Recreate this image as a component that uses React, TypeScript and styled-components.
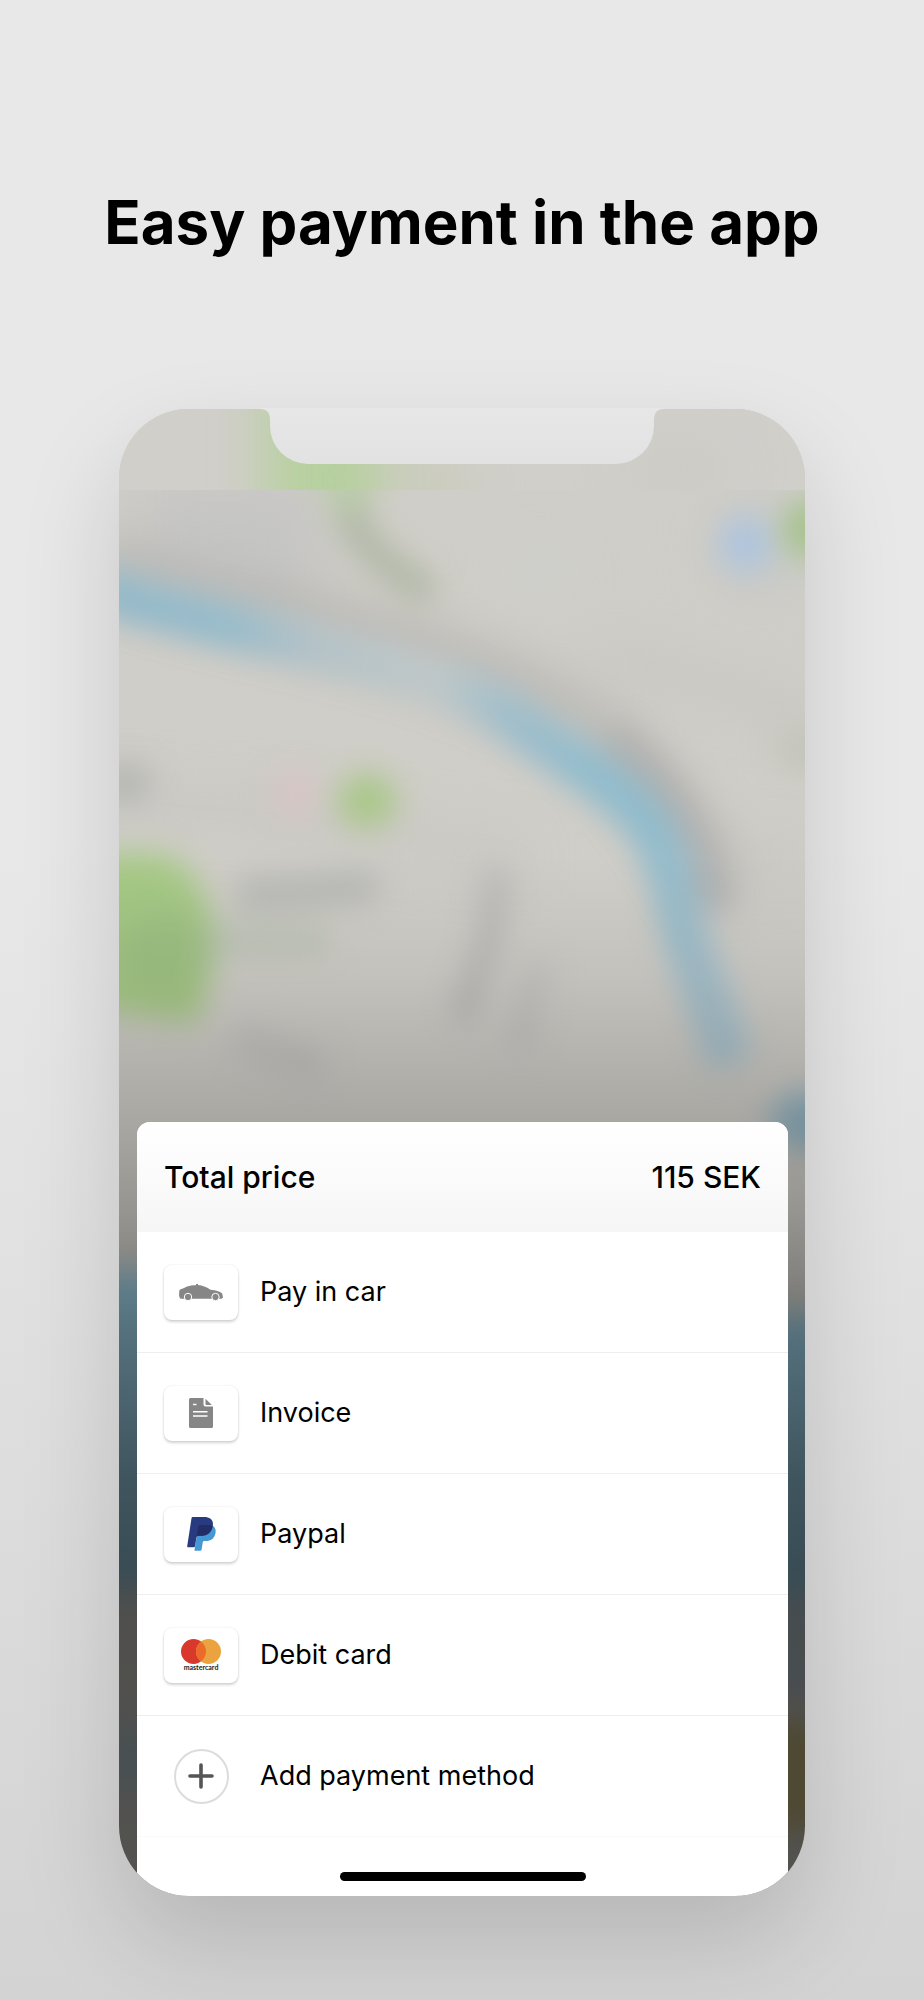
import React from "react";
import styled, { createGlobalStyle } from "styled-components";

const GlobalStyle = createGlobalStyle`
  *, *::before, *::after { box-sizing: border-box; }
  html { background: #e8e8e8; }
  body {
    margin: 0;
    color: #000;
    font-family: Inter, "Liberation Sans", sans-serif;
  }
  #root { min-height: 100vh; display: flex; flex-direction: column; }
`;

const Page = styled.main`
  flex: 1;
  display: flex;
  flex-direction: column;
  align-items: center;
  padding: 182px 24px 104px;
  overflow: hidden;
  background: linear-gradient(#e8e8e8 0%, #e8e8e8 42%, #e3e3e3 58%, #d3d3d3 100%);
`;

const Title = styled.h1`
  margin: 0 0 147px;
  font-size: 60px;
  line-height: 80px;
  font-weight: 700;
  text-align: center;
`;

const Phone = styled.section`
  position: relative;
  width: 100%;
  max-width: 686px;
  border-radius: 70px;
  box-shadow: 0 44px 100px rgba(0, 0, 0, 0.15);
`;

const Screen = styled.div`
  position: relative;
  padding: 713px 17px 0 18px;
  overflow: hidden;
  border-radius: inherit;
  background: #d0cec8;
`;

const MapCanvas = styled.svg`
  position: absolute;
  inset: 0;
  width: 100%;
  height: 100%;
`;

const Notch = styled.svg`
  position: absolute;
  top: -1px;
  left: 50%;
  width: 404px;
  max-width: 60%;
  transform: translateX(-50%);
`;

const Sheet = styled.div`
  position: relative;
  display: flex;
  flex-direction: column;
  overflow: hidden;
  border-radius: 13px 13px 0 0;
  background: #fff;
`;

const Total = styled.header`
  display: flex;
  justify-content: space-between;
  align-items: center;
  height: 110px;
  padding: 0 27px;
  background: linear-gradient(#fff, #f6f6f6);
  font-size: 30px;
  line-height: 40px;
  font-weight: 500;
`;

const Methods = styled.ul`
  margin: 0;
  padding: 0;
  list-style: none;
`;

const Method = styled.li`
  border-bottom: 1px solid #eeeeee;
  &:last-child { border-color: #fafafa; }
`;

const MethodButton = styled.button`
  display: flex;
  align-items: center;
  gap: 22px;
  width: 100%;
  height: 120px;
  padding: 0 27px;
  border: 0;
  background: none;
  color: inherit;
  font: inherit;
  font-size: 27px;
  line-height: 36px;
  text-align: left;
  cursor: pointer;
`;

const IconSlot = styled.span`
  display: flex;
  justify-content: center;
  flex: none;
  width: 74px;
`;

const IconTile = styled.span<{ $round?: boolean }>`
  display: flex;
  align-items: center;
  justify-content: center;
  width: ${(p) => (p.$round ? "55px" : "74px")};
  height: 55px;
  border: ${(p) => (p.$round ? "2px solid #dcdcdc" : "0")};
  border-radius: ${(p) => (p.$round ? "50%" : "8px")};
  box-shadow: ${(p) =>
    p.$round ? "none" : "0 2px 3px rgba(0, 0, 0, 0.17), 0 0 2px rgba(0, 0, 0, 0.1)"};
`;

const HomeArea = styled.footer`
  display: flex;
  justify-content: center;
  padding: 35px 0 15px;
`;

const HomeBar = styled.span`
  width: 246px;
  height: 9px;
  border-radius: 5px;
  background: #000;
`;

const CarIcon = () => (
  <svg width="44" height="17" viewBox="0 0 44 17" aria-hidden="true">
    <path
      fill="#868686"
      d="M17 1.2V0h2v1.1c4.500.1 8 2 12.500 4.700 5 .5 9.500 1.500 11.300 3.500.8 1 .9 2.700 1.200 4.200l-1.400 1.300H1.500C.3 13.500-.2 11 .2 9c.1-1.600-.2-2.600.9-3.500C3.500 4.800 5.500 3.800 8 2.600c3-1.200 5.500-1.400 9-1.400z"
    />
    <g fill="#868686" stroke="#fff" strokeWidth="1">
      <circle cx="9" cy="13" r="3.700" />
      <circle cx="36.500" cy="13" r="3.700" />
    </g>
  </svg>
);

const InvoiceIcon = () => (
  <svg width="24" height="30" viewBox="0 0 24 30" aria-hidden="true">
    <path
      fill="#868686"
      d="M1.500 0H14.500V6.500Q14.500 8.500 16.500 8.500H24V28.500Q24 30 22.500 30H1.500Q0 30 0 28.500V1.500Q0 0 1.500 0z"
    />
    <path fill="#868686" d="M16.500 0.800L22.800 7H17.500Q16.500 7 16.500 6z" />
    <path fill="none" stroke="#fff" strokeWidth="1.600" d="M4 6.500H7.500M4 13.700H18.500M4 18H18.500" />
  </svg>
);

const PaypalIcon = () => (
  <svg width="29" height="34" viewBox="0 0 29 34" aria-hidden="true">
    <path
      fill="#4698d5"
      d="M25.600 8.500C28.300 10.500 29.200 13 28.400 16.500 27.400 21.500 24 24 18.500 24H17Q16 24 15.800 25L14.600 32.500Q14.400 33.800 13.200 33.800H8.200Q7.300 33.800 7.500 32.800L10 18z"
    />
    <path
      fill="#283b80"
      d="M5.800 0H17.200C23 0 26.800 3 25.800 8.600 24.700 15.500 20.600 18.800 14.500 18.800H11.300Q9.800 18.800 9.500 20.300L8 29.200Q7.800 30.300 6.700 30.300H1Q0 30.300.2 29.300L4.500 1.200Q4.700 0 5.800 0z"
    />
    <path
      fill="#222d65"
      d="M11.200 9.500Q11.400 8 13 8H21.500C23 8 24.500 8.100 25.700 8.800 24.600 15.500 20.500 18.800 14.500 18.800H11.300Q10 18.800 9.600 19.800z"
    />
  </svg>
);

const MastercardIcon = () => (
  <svg width="42" height="33" viewBox="0 0 42 33" aria-hidden="true">
    <circle cx="13.500" cy="12.500" r="12.500" fill="#d9392c" />
    <circle cx="28.500" cy="12.500" r="12.500" fill="#eaa33f" />
    <path fill="#ec6b2b" d="M21 2.500a12.500 12.500 0 0 1 0 20a12.500 12.500 0 0 1 0-20z" />
    <text x="21" y="31" textAnchor="middle" fontFamily="Lato, sans-serif" fontWeight="700" fontSize="7" fill="#222">
      mastercard
    </text>
  </svg>
);

const PlusIcon = () => (
  <svg width="26" height="26" viewBox="0 0 26 26" aria-hidden="true">
    <path fill="none" stroke="#555" strokeWidth="3.600" strokeLinecap="round" d="M13 2V24M2 13H24" />
  </svg>
);

const BlurredMap = () => (
  <MapCanvas viewBox="0 0 686 1487" preserveAspectRatio="none" aria-hidden="true">
    <defs>
      <filter id="soft" filterUnits="userSpaceOnUse" x="-100" y="-100" width="886" height="1687" colorInterpolationFilters="sRGB">
        <feGaussianBlur stdDeviation="15" />
      </filter>
      <filter id="wide" filterUnits="userSpaceOnUse" x="-100" y="-100" width="886" height="1687" colorInterpolationFilters="sRGB">
        <feGaussianBlur stdDeviation="26" />
      </filter>
      <clipPath id="status"><rect width="686" height="81" /></clipPath>
      <clipPath id="body"><rect y="81" width="686" height="1406" /></clipPath>
      <linearGradient id="shade" x1="0" y1="0" x2="0" y2="1">
        <stop offset="0" stopOpacity="0" />
        <stop offset="0.300" stopOpacity="0" />
        <stop offset="0.380" stopOpacity="0.060" />
        <stop offset="0.480" stopOpacity="0.190" />
        <stop offset="0.540" stopOpacity="0.280" />
        <stop offset="0.620" stopOpacity="0.440" />
        <stop offset="0.720" stopOpacity="0.580" />
        <stop offset="0.780" stopOpacity="0.620" />
        <stop offset="1" stopOpacity="0.600" />
      </linearGradient>
      <linearGradient id="river" gradientUnits="userSpaceOnUse" x1="0" y1="0" x2="686" y2="0">
        <stop offset="0" stopColor="#92b9ca" />
        <stop offset="0.160" stopColor="#95bbcb" />
        <stop offset="0.280" stopColor="#b2c2c8" />
        <stop offset="0.460" stopColor="#bfc8c9" />
        <stop offset="0.570" stopColor="#9dbdcb" />
        <stop offset="0.680" stopColor="#90bccd" />
        <stop offset="0.790" stopColor="#90bccd" />
        <stop offset="0.850" stopColor="#a5bfcb" />
        <stop offset="0.900" stopColor="#a8c3cf" />
      </linearGradient>
    </defs>
    <rect width="686" height="1487" fill="#d0cec8" />
    <g clipPath="url(#body)">
      <g filter="url(#wide)">
        <path fill="#c5c5c4" d="M20 70H190L210 170L90 200L20 150z" />
        <path fill="none" stroke="#b3b2ae" strokeWidth="36" d="M-30 145C80 190 190 200 300 238S470 300 520 360S580 440 600 480" />
        <path fill="none" stroke="#c5c4c0" strokeWidth="24" d="M480 240L700 310M-20 390L160 405L400 450M600 450H700" />
        <ellipse cx="420" cy="162" rx="34" ry="20" fill="#cbd1cc" />
        <ellipse cx="640" cy="140" rx="45" ry="45" fill="#c6c9c8" />
      </g>
      <g filter="url(#soft)">
        <path fill="#bbccaa" d="M190 50H265L248 115L215 108z" />
        <path fill="none" stroke="#b0b7a6" strokeWidth="30" d="M228 100C240 135 265 155 312 186" />
        <path fill="none" stroke="#afb0af" strokeWidth="28" d="M490 325C545 365 580 420 602 500" />
        <path fill="none" stroke="url(#river)" strokeWidth="46" d="M-30 178C50 204 120 218 193 238S340 272 400 315S522 387 544 442S554 492 577 552L612 655" />
        <ellipse cx="626" cy="135" rx="24" ry="26" fill="#acc4e0" />
        <ellipse cx="690" cy="120" rx="26" ry="30" fill="#a5c28b" />
        <ellipse cx="176" cy="384" rx="22" ry="24" fill="#d7c5c5" />
        <ellipse cx="248" cy="392" rx="30" ry="28" fill="#aac78a" />
        <ellipse cx="6" cy="374" rx="26" ry="20" fill="#b3b5b1" />
        <path fill="#a6c985" d="M-50 444H30C65 444 82 470 98 520L94 560L78 614L-50 597z" />
        <ellipse cx="44" cy="540" rx="46" ry="40" fill="#9fc284" />
        <path fill="none" stroke="#b6b8b4" strokeWidth="32" d="M118 486Q190 482 258 476" />
        <path fill="none" stroke="#bcc4b6" strokeWidth="28" d="M90 531H208" />
        <path fill="none" stroke="#b8b8b5" strokeWidth="26" d="M379 460L370 530L342 612" />
        <path fill="none" stroke="#c2c2be" strokeWidth="28" d="M420 550L398 640" />
        <path fill="none" stroke="#c3c2be" strokeWidth="34" d="M115 628L205 658" />
        <ellipse cx="692" cy="712" rx="42" ry="30" fill="#91b3c2" />
        <rect x="-50" y="862" width="100" height="318" fill="#96c9df" />
        <rect x="640" y="906" width="100" height="280" fill="#96c9df" />
        <rect x="-50" y="1320" width="100" height="60" fill="#b7cbd4" />
        <rect x="640" y="1186" width="100" height="100" fill="#b8c6ce" />
        <rect x="640" y="1314" width="100" height="108" fill="#c7b980" />
        <rect x="660" y="320" width="70" height="40" fill="#c2c4bb" />
      </g>
      <rect width="686" height="1487" fill="url(#shade)" />
    </g>
    <g clipPath="url(#status)">
      <rect width="686" height="81" fill="#d1cfca" />
      <path filter="url(#wide)" fill="#b7d09f" d="M145 -60H210L275 50V140H145z" />
      <path filter="url(#wide)" fill="#c9ccba" d="M265 50H345V140H265z" />
      <ellipse filter="url(#wide)" cx="560" cy="60" rx="50" ry="24" fill="#c9cac4" />
    </g>
  </MapCanvas>
);

const methods = [
  { label: "Pay in car", Icon: CarIcon },
  { label: "Invoice", Icon: InvoiceIcon },
  { label: "Paypal", Icon: PaypalIcon },
  { label: "Debit card", Icon: MastercardIcon },
  { label: "Add payment method", Icon: PlusIcon, round: true },
];

export default function App() {
  return (
    <>
      <GlobalStyle />
      <Page>
        <Title>Easy payment in the app</Title>
        <Phone aria-label="Payment methods">
          <Screen>
            <BlurredMap />
            <Sheet>
              <Total>
                <span>Total price</span>
                <span>115 SEK</span>
              </Total>
              <Methods>
                {methods.map(({ label, Icon, round }) => (
                  <Method key={label}>
                    <MethodButton type="button">
                      <IconSlot>
                        <IconTile $round={round}>
                          <Icon />
                        </IconTile>
                      </IconSlot>
                      {label}
                    </MethodButton>
                  </Method>
                ))}
              </Methods>
              <HomeArea>
                <HomeBar />
              </HomeArea>
            </Sheet>
          </Screen>
          <Notch viewBox="0 0 404 56" aria-hidden="true">
            <defs>
              <linearGradient id="notchFill" x1="0" y1="0" x2="0" y2="1">
                <stop offset="0" stopColor="#e7e7e7" />
                <stop offset="1" stopColor="#e2e2e2" />
              </linearGradient>
            </defs>
            <path
              fill="url(#notchFill)"
              d="M0 0H404V1Q394 1 394 12V18A38 38 0 0 1 356 56H48A38 38 0 0 1 10 18V12Q10 1 0 1z"
            />
          </Notch>
        </Phone>
      </Page>
    </>
  );
}
